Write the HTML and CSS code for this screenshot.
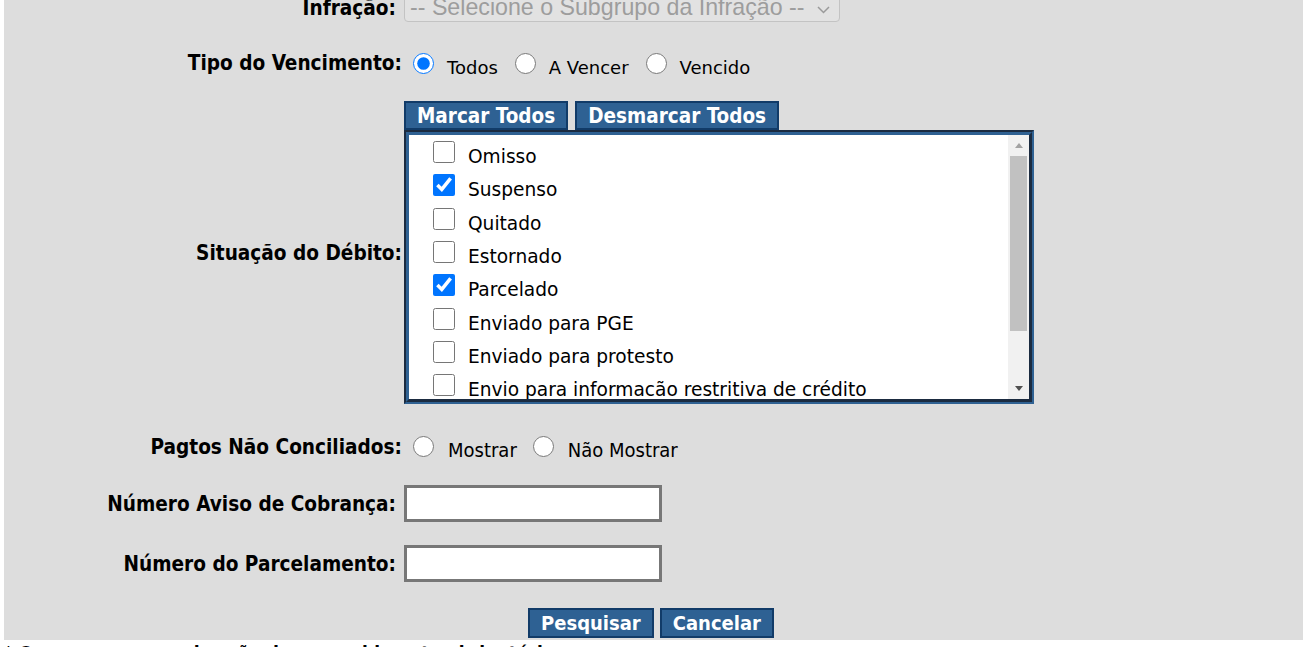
FILE: index.html
```html
<!DOCTYPE html>
<html lang="pt-BR">
<head>
    <meta charset="UTF-8">
    <title>Consulta de Débitos</title>
    <link rel="stylesheet" href="styles.css">
</head>
<body>
    <div class="panel">
        <div class="row row-infracao">
            <div class="lbl lbl-narrow">Infração:</div>
            <div class="val">
                <div class="fake-select">
                    <span>-- Selecione o Subgrupo da Infração --</span>
                    <svg class="chevron" width="13" height="8" viewBox="0 0 13 8"><polyline points="1,1 6.5,6.5 12,1" fill="none" stroke="#9a9a9a" stroke-width="1.5"/></svg>
                </div>
            </div>
        </div>

        <div class="row row-vencimento">
            <div class="lbl lbl-up">Tipo do Vencimento:</div>
            <div class="val choices">
                <label class="opt"><input type="radio" name="venc" checked>Todos</label>
                <label class="opt"><input type="radio" name="venc">A Vencer</label>
                <label class="opt"><input type="radio" name="venc">Vencido</label>
            </div>
        </div>

        <div class="row row-situacao">
            <div class="lbl">Situação do Débito:</div>
            <div class="val">
                <div class="tabs">
                    <button class="tab-btn">Marcar Todos</button>
                    <button class="tab-btn">Desmarcar Todos</button>
                </div>
                <div class="listbox">
                    <div class="listbox-inner">
                        <div class="items">
                            <div class="item"><label class="chk"><input type="checkbox">Omisso</label></div>
                            <div class="item"><label class="chk"><input type="checkbox" checked>Suspenso</label></div>
                            <div class="item"><label class="chk"><input type="checkbox">Quitado</label></div>
                            <div class="item"><label class="chk"><input type="checkbox">Estornado</label></div>
                            <div class="item"><label class="chk"><input type="checkbox" checked>Parcelado</label></div>
                            <div class="item"><label class="chk"><input type="checkbox">Enviado para PGE</label></div>
                            <div class="item"><label class="chk"><input type="checkbox">Enviado para protesto</label></div>
                            <div class="item"><label class="chk"><input type="checkbox">Envio para informacão restritiva de crédito</label></div>
                            <div class="item"><label class="chk"><input type="checkbox">Cancelado</label></div>
                            <div class="item"><label class="chk"><input type="checkbox">Prescrito</label></div>
                        </div>
                        <div class="scrollbar">
                            <div class="sb-btn"><span class="arrow-up"></span></div>
                            <div class="sb-thumb"></div>
                            <div class="sb-rest"></div>
                            <div class="sb-btn"><span class="arrow-down"></span></div>
                        </div>
                    </div>
                </div>
            </div>
        </div>

        <div class="row row-pagtos">
            <div class="lbl lbl-up">Pagtos Não Conciliados:</div>
            <div class="val choices choices-cond">
                <label class="opt"><input type="radio" name="pagtos">Mostrar</label>
                <label class="opt"><input type="radio" name="pagtos">Não Mostrar</label>
            </div>
        </div>

        <div class="row row-aviso">
            <div class="lbl lbl-narrow">Número Aviso de Cobrança:</div>
            <div class="val"><input type="text" class="text-input"></div>
        </div>

        <div class="row row-parcelamento">
            <div class="lbl lbl-narrow">Número do Parcelamento:</div>
            <div class="val"><input type="text" class="text-input"></div>
        </div>

        <div class="actions">
            <button class="btn">Pesquisar</button>
            <button class="btn">Cancelar</button>
        </div>
    </div>
    <p class="note">* Os campos marcados são de preenchimento obrigatório</p>
</body>
</html>
```

FILE: styles.css
```css
/* Global */
html, body {
    overflow: hidden;
}

body {
    margin: 0;
    background-color: #ffffff;
    color: #000000;
    font-family: "DejaVu Sans", Verdana, sans-serif;
}

.panel {
    margin-left: 4px;
    background-color: #dddddd;
    padding-bottom: 2px;
}

/* Form rows */
.row {
    display: grid;
    grid-template-columns: 398px 1fr;
    column-gap: 2px;
    align-items: center;
}

.lbl {
    text-align: right;
    font-family: "DejaVu Sans Condensed", "DejaVu Sans", sans-serif;
    font-stretch: condensed;
    font-weight: bold;
    font-size: 20.6px;
}

.lbl-narrow {
    padding-right: 6px;
}

.lbl-up {
    padding-bottom: 5px;
}

.row-infracao {
    height: 40px;
    margin-top: -18px;
    align-items: end;
}

.row-infracao .lbl {
    padding-bottom: 2px;
}

.row-vencimento {
    height: 30px;
    margin-top: 28px;
}

.row-situacao {
    margin-top: 21px;
}

.row-pagtos {
    height: 30px;
    margin-top: 30px;
}

.row-aviso {
    margin-top: 21px;
}

.row-parcelamento {
    margin-top: 23px;
}

/* Disabled select */
.fake-select {
    width: 436px;
    height: 40px;
    box-sizing: border-box;
    display: flex;
    align-items: flex-end;
    justify-content: space-between;
    padding: 0 9px 2px 5px;
    background-color: #e2e2e2;
    border: 1px solid #c3c3c3;
    border-radius: 4px;
    color: #9d9d9d;
    font-family: "Liberation Sans", Arial, sans-serif;
    font-size: 23.2px;
    line-height: 23px;
}

.chevron {
    margin-bottom: 5px;
}

/* Radio groups */
.choices {
    font-size: 0;
    padding-left: 9px;
}

.opt {
    font-size: 18px;
    margin-right: 17px;
}

.opt input {
    width: 21px;
    height: 21px;
    margin: 0 13px 0 0;
}

.choices-cond .opt {
    font-family: "DejaVu Sans Condensed", "DejaVu Sans", sans-serif;
    font-stretch: condensed;
    font-size: 20px;
    margin-right: 16px;
}

.choices-cond .opt input {
    margin-right: 14px;
}

/* Marcar / desmarcar */
.tabs {
    display: flex;
    gap: 7px;
}

.tab-btn, .btn {
    font-family: "DejaVu Sans Condensed", "DejaVu Sans", sans-serif;
    font-stretch: condensed;
    font-weight: bold;
    color: #ffffff;
    background-color: #2e6193;
    border: 2px solid #113b68;
    border-radius: 0;
    margin: 0;
    cursor: pointer;
}

.tab-btn {
    font-size: 20.5px;
    line-height: 21px;
    padding: 3px 11px 1px;
}

/* Listbox */
.listbox {
    width: 630px;
    height: 274px;
    box-sizing: border-box;
    border: 2px solid;
    border-color: #1b2b40 #2f6192 #2f6192 #1b2b40;
}

.listbox-inner {
    height: 100%;
    box-sizing: border-box;
    display: flex;
    background-color: #ffffff;
    border: 3px solid;
    border-color: #2f6192 #1b2b40 #1b2b40 #2f6192;
}

.items {
    flex: 1;
    overflow: hidden;
    padding-top: 2.5px;
}

.item {
    height: 33.33px;
    display: flex;
    align-items: center;
}

.chk {
    font-size: 18.6px;
    white-space: nowrap;
}

.chk input {
    width: 22px;
    height: 22px;
    margin: 0 12.7px 0 24.3px;
}

.scrollbar {
    width: 21px;
    display: flex;
    flex-direction: column;
    background-color: #f1f1f1;
}

.sb-btn {
    height: 21px;
    display: flex;
    align-items: center;
    justify-content: center;
}

.arrow-up {
    width: 0;
    height: 0;
    border-left: 4.5px solid transparent;
    border-right: 4.5px solid transparent;
    border-bottom: 5px solid #a3a3a3;
}

.arrow-down {
    width: 0;
    height: 0;
    border-left: 4.5px solid transparent;
    border-right: 4.5px solid transparent;
    border-top: 5px solid #505050;
}

.sb-thumb {
    height: 175px;
    margin: 0 2px;
    background-color: #c1c1c1;
}

.sb-rest {
    flex: 1;
}

/* Text inputs */
.text-input {
    width: 258px;
    height: 37px;
    box-sizing: border-box;
    margin: 0;
    border: 3px solid #777777;
    background-color: #ffffff;
    font-size: 18px;
}

/* Bottom buttons */
.actions {
    display: flex;
    justify-content: center;
    gap: 6px;
    margin-top: 26px;
    padding-right: 5px;
}

.btn {
    font-size: 20px;
    line-height: 22px;
    padding: 2px 11px;
}

.note {
    margin: 3px 0 0 4px;
    font-weight: bold;
    font-size: 17px;
    line-height: 20px;
}
```
